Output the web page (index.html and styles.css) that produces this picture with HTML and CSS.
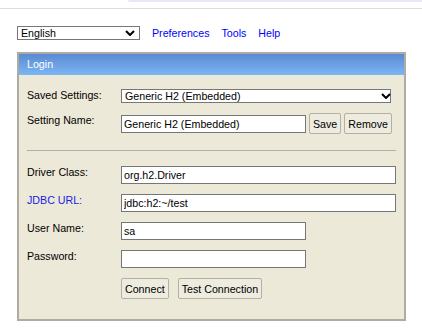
FILE: index.html
```html
<!DOCTYPE html>
<html lang="en">
<head>
<meta charset="utf-8">
<title>H2 Console</title>
<link rel="stylesheet" href="styles.css">
</head>
<body>
<div class="chrome"><div class="chrome-tab"></div></div>
<div class="page">
  <div class="toolbar">
    <span class="selwrap sel-lang">
      <select class="select"><option>English</option></select>
      <svg class="chev" width="10" height="6" viewBox="0 0 10 6"><path d="M1 1 L5 5 L9 1" fill="none" stroke="#000" stroke-width="2"/></svg>
    </span>
    <a class="link" href="#">Preferences</a>
    <a class="link" href="#">Tools</a>
    <a class="link" href="#">Help</a>
  </div>
  <div class="panel">
    <div class="panel-head">Login</div>
    <div class="panel-body">
      <div class="row row-first">
        <label class="lbl">Saved Settings:</label>
        <span class="selwrap sel-saved">
          <select class="select"><option>Generic H2 (Embedded)</option></select>
          <svg class="chev" width="10" height="6" viewBox="0 0 10 6"><path d="M1 1 L5 5 L9 1" fill="none" stroke="#000" stroke-width="2"/></svg>
        </span>
      </div>
      <div class="row">
        <label class="lbl lbl-name">Setting Name:</label>
        <div class="ctrls">
          <input class="field field-short" type="text" value="Generic H2 (Embedded)">
          <button class="btn">Save</button>
          <button class="btn">Remove</button>
        </div>
      </div>
      <div class="sep"></div>
      <div class="row row-field">
        <label class="lbl">Driver Class:</label>
        <input class="field field-long" type="text" value="org.h2.Driver">
      </div>
      <div class="row row-field">
        <label class="lbl lbl-link">JDBC URL:</label>
        <input class="field field-long" type="text" value="jdbc:h2:~/test">
      </div>
      <div class="row row-field">
        <label class="lbl">User Name:</label>
        <input class="field field-short" type="text" value="sa">
      </div>
      <div class="row row-field">
        <label class="lbl">Password:</label>
        <input class="field field-short" type="password" value="">
      </div>
      <div class="row">
        <span></span>
        <div class="ctrls ctrls-wide">
          <button class="btn">Connect</button>
          <button class="btn">Test Connection</button>
        </div>
      </div>
    </div>
  </div>
</div>
</body>
</html>
```
FILE: styles.css
```css
* { box-sizing: border-box; }
html, body { margin: 0; padding: 0; background: #ffffff; }
body {
  font-family: "Liberation Sans", Arial, sans-serif;
  font-size: 10.67px;
  color: #000;
}
.chrome {
  height: 9px;
  border-bottom: 1px solid #dedede;
  display: flex;
}
.chrome-tab {
  margin-left: 128px;
  flex: 1;
  height: 2px;
  background: #e6e9f6;
  border-bottom-left-radius: 3px;
}
.page { padding: 17px 16px 0 17px; }
.toolbar {
  display: flex;
  align-items: center;
  gap: 12px;
  height: 14px;
}
.selwrap { position: relative; display: inline-block; }
.select {
  -webkit-appearance: none;
  appearance: none;
  display: block;
  height: 14px;
  border: 1px solid #767676;
  border-radius: 0;
  background: #fff;
  font-family: "Liberation Sans", Arial, sans-serif;
  font-size: 10.67px;
  color: #000;
  padding: 0 0 0 3px;
  margin: 0;
  line-height: 12px;
}
.sel-lang .select { width: 123px; }
.sel-saved .select { width: 270px; }
.chev { position: absolute; right: 5px; top: 4px; }
.link {
  color: #0000ff;
  text-decoration: none;
  line-height: 14px;
}
.panel {
  margin-top: 12px;
  width: 389px;
  border: 2px solid #aeaba2;
  background: #ece9d8;
}
.panel-head {
  height: 21px;
  line-height: 20px;
  padding-left: 8px;
  color: #fff;
  background: linear-gradient(#5b8ad3, #7cb6f3);
}
.panel-body { padding: 14px 8px 20px 8px; }
.row {
  display: grid;
  grid-template-columns: 94px auto;
  align-items: start;
}
.row-first { margin-bottom: 10px; }
.row-field { margin-bottom: 10px; }
.lbl { line-height: normal; display: block; }
.lbl-name { padding-top: 1px; }
.lbl-link { color: #2020e8; }
.ctrls {
  display: flex;
  align-items: center;
  gap: 3px;
}
.ctrls-wide { gap: 9px; }
.field {
  height: 18px;
  border: 1px solid #767676;
  border-radius: 0;
  background: #fff;
  padding: 0 2px;
  margin: 0;
  font-family: "Liberation Sans", Arial, sans-serif;
  font-size: 10.67px;
  color: #000;
  outline: none;
}
.field-short { width: 185px; }
.field-long { width: 275px; }
.btn {
  height: 21px;
  padding: 0 3px;
  margin: 0;
  border: 1px solid #b3b0a5;
  border-radius: 2px;
  background: #eeebdf;
  font-family: "Liberation Sans", Arial, sans-serif;
  font-size: 10.67px;
  color: #000;
}
.sep {
  margin: 16px 0 15px 0;
  height: 1px;
  background: #aeaeae;
}
```
